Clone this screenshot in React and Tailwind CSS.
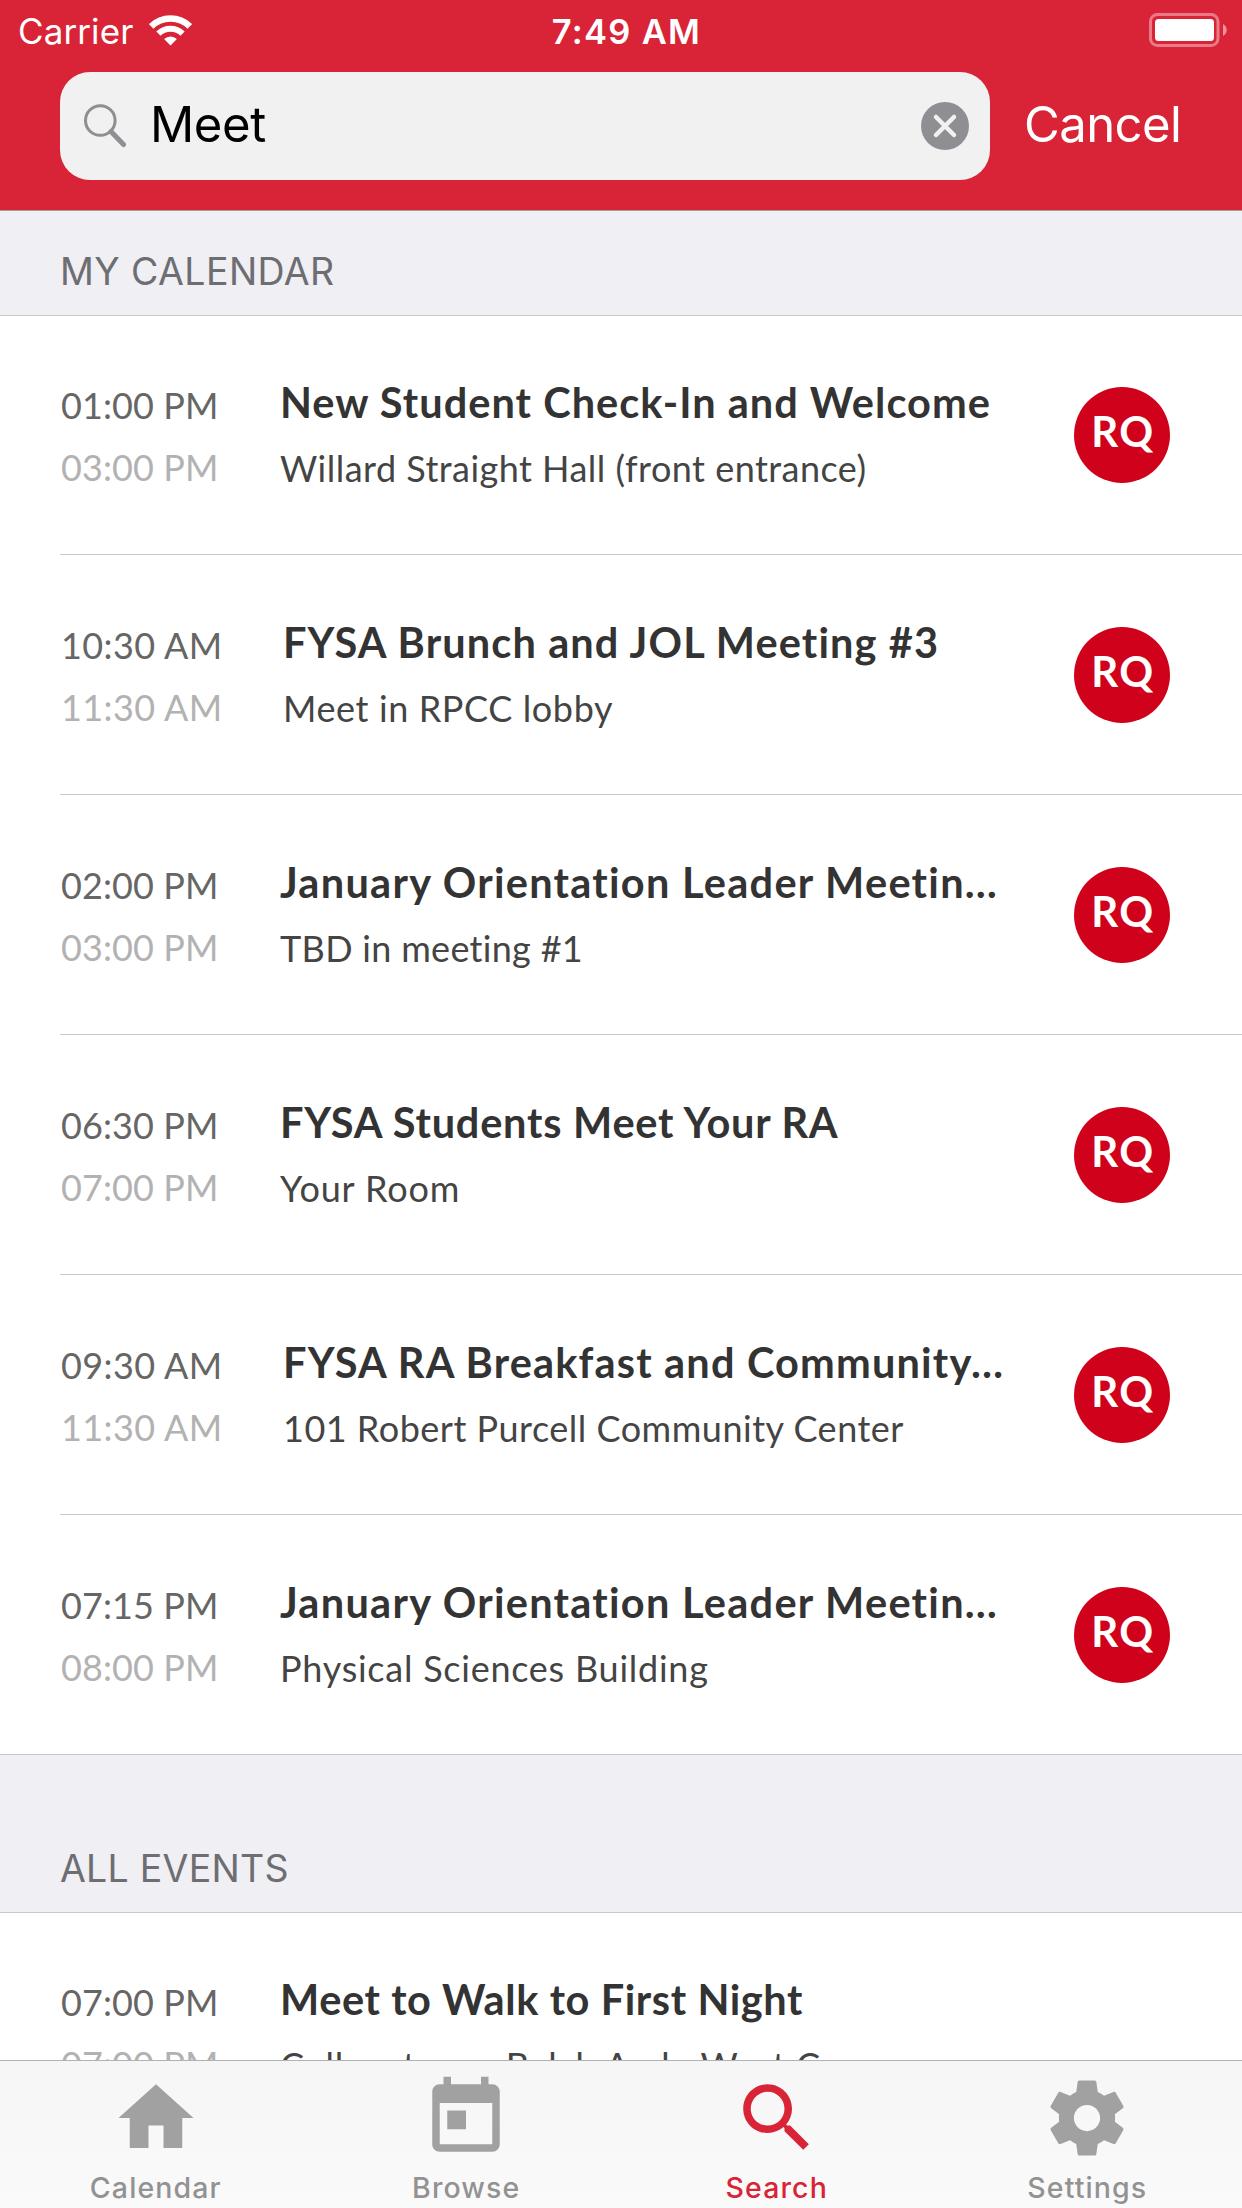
import React from "react";

const myCalendar = [
  {
    start: "01:00 PM",
    end: "03:00 PM",
    title: "New Student Check-In and Welcome",
    place: "Willard Straight Hall (front entrance)",
    titleTracking: "tracking-[1.03px]",
    placeTracking: "tracking-[0.47px]",
  },
  {
    start: "10:30 AM",
    end: "11:30 AM",
    title: "FYSA Brunch and JOL Meeting #3",
    place: "Meet in RPCC lobby",
    titleTracking: "tracking-[1.12px]",
    placeTracking: "tracking-[0.61px]",
  },
  {
    start: "02:00 PM",
    end: "03:00 PM",
    title: "January Orientation Leader Meetin…",
    place: "TBD in meeting #1",
    titleTracking: "tracking-[1.28px]",
    placeTracking: "tracking-[0.3px]",
  },
  {
    start: "06:30 PM",
    end: "07:00 PM",
    title: "FYSA Students Meet Your RA",
    place: "Your Room",
    titleTracking: "tracking-[0.77px]",
    placeTracking: "tracking-[0.87px]",
  },
  {
    start: "09:30 AM",
    end: "11:30 AM",
    title: "FYSA RA Breakfast and Community…",
    place: "101 Robert Purcell Community Center",
    titleTracking: "tracking-[1.17px]",
    placeTracking: "tracking-[0.5px]",
  },
  {
    start: "07:15 PM",
    end: "08:00 PM",
    title: "January Orientation Leader Meetin…",
    place: "Physical Sciences Building",
    titleTracking: "tracking-[1.28px]",
    placeTracking: "tracking-[0.75px]",
  },
];

const allEvents = [
  {
    start: "07:00 PM",
    end: "07:00 PM",
    title: "Meet to Walk to First Night",
    place: "Collegetown, Balch Arch, West Campus",
    titleTracking: "tracking-[0.6px]",
    placeTracking: "tracking-[0.75px]",
  },
];

const tabs = [
  { label: "Calendar", path: "M10 20v-6h4v6h5v-8h3L12 3 2 12h3v8z" },
  {
    label: "Browse",
    path: "M19 3h-1V1h-2v2H8V1H6v2H5c-1.11 0-1.99.9-1.99 2L3 19c0 1.1.89 2 2 2h14c1.1 0 2-.9 2-2V5c0-1.1-.9-2-2-2zm0 16H5V8h14v11zM7 10h5v5H7z",
  },
  {
    label: "Search",
    active: true,
    path: "M15.5 14h-.79l-.28-.27C15.41 12.59 16 11.11 16 9.5 16 5.91 13.09 3 9.5 3S3 5.91 3 9.5 5.91 16 9.5 16c1.61 0 3.09-.59 4.23-1.57l.27.28v.79l5 4.99L20.49 19l-4.99-5zm-6 0C7.01 14 5 11.99 5 9.5S7.01 5 9.5 5 14 7.01 14 9.5 11.99 14 9.5 14z",
  },
  {
    label: "Settings",
    path: "M19.43 12.98c.04-.32.07-.64.07-.98s-.03-.66-.07-.98l2.11-1.65c.19-.15.24-.42.12-.64l-2-3.46c-.12-.22-.39-.3-.61-.22l-2.49 1c-.52-.4-1.08-.73-1.69-.98l-.38-2.65C14.46 2.18 14.25 2 14 2h-4c-.25 0-.46.18-.49.42l-.38 2.65c-.61.25-1.17.59-1.69.98l-2.49-1c-.23-.09-.49 0-.61.22l-2 3.46c-.13.22-.07.49.12.64l2.11 1.65c-.04.32-.07.65-.07.98s.03.66.07.98l-2.11 1.65c-.19.15-.24.42-.12.64l2 3.46c.12.22.39.3.61.22l2.49-1c.52.4 1.08.73 1.69.98l.38 2.65c.03.24.24.42.49.42h4c.25 0 .46-.18.49-.42l.38-2.65c.61-.25 1.17-.59 1.69-.98l2.49 1c.23.09.49 0 .61-.22l2-3.46c.12-.22.07-.49-.12-.64l-2.11-1.65zM12 15.5c-1.93 0-3.5-1.57-3.5-3.5s1.57-3.5 3.5-3.5 3.5 1.57 3.5 3.5-1.57 3.5-3.5 3.5z",
  },
];

function StatusBar() {
  return (
    <div className="grid h-[62px] grid-cols-3 leading-[62px] text-white">
      <div className="flex pl-[18px]">
        <span className="text-[35px] tracking-[0.1px]">Carrier</span>
        <svg className="mt-[15px] ml-[16px] h-[31px] w-[43px]" viewBox="0 0 43 31" fill="none">
          <path d="M2.2 11.4A27.6 27.6 0 0 1 40.8 11.4" stroke="#fff" strokeWidth="6.4" />
          <path d="M9.4 18.7A17.4 17.4 0 0 1 33.6 18.7" stroke="#fff" strokeWidth="6" />
          <path d="M21.5 30.4l-6.4-6.3a9.2 9.2 0 0 1 12.8 0z" fill="#fff" />
        </svg>
      </div>
      <div className="pt-px pl-[11px] text-center text-[34.5px] font-semibold tracking-[1.3px]">7:49 AM</div>
      <div className="flex justify-end pt-[13px] pr-[15px]">
        <svg className="h-[34px] w-[78px]" viewBox="0 0 78 34">
          <rect x="1.5" y="1.5" width="67.5" height="31" rx="7" fill="none" stroke="#fff" strokeOpacity=".4" strokeWidth="3" />
          <rect x="6" y="6" width="59" height="22" rx="3.5" fill="#fff" />
          <path d="M74 11c5 2.6 5 9.4 0 12z" fill="#fff" fillOpacity=".5" />
        </svg>
      </div>
    </div>
  );
}

function SearchRow() {
  return (
    <div className="mt-[10px] flex h-[108px] items-center pl-[60px]">
      <div className="flex h-full w-[930px] items-center rounded-[30px] bg-[#f1f1f2] pr-[21px] pl-[24px]">
        <svg className="h-[44px] w-[44px]" viewBox="0 0 44 44" fill="none" stroke="#8e8e93">
          <circle cx="16.3" cy="16.5" r="14.8" strokeWidth="3" />
          <path d="M27 27.5L39.5 40.5" strokeWidth="5" strokeLinecap="round" />
        </svg>
        <span className="flex-1 pb-[2px] pl-[22px] text-[49px] tracking-[-0.4px] text-black">Meet</span>
        <svg className="h-[48px] w-[48px]" viewBox="0 0 48 48">
          <circle cx="24" cy="24" r="24" fill="#8e8e93" />
          <path d="M15 15l18 18M33 15L15 33" stroke="#f1f1f2" strokeWidth="4.5" strokeLinecap="round" />
        </svg>
      </div>
      <span className="ml-[34px] pb-[2px] text-[49px] tracking-[-0.55px] text-white">Cancel</span>
    </div>
  );
}

function SectionHeader({ label, size, tracking }) {
  return (
    <div className={`flex shrink-0 items-end border-b border-[#c8c7cc] bg-[#efeff4] pb-[23px] pl-[60px] ${size}`}>
      <span className={`text-[37.5px] leading-[40px] text-[#6d6d72] ${tracking}`}>{label}</span>
    </div>
  );
}

function EventRow({ event, avatar, last }) {
  const morning = event.start.endsWith("AM");
  return (
    <div className="h-[240px] shrink-0 pl-[60px] font-['Lato',sans-serif]">
      <div className={`flex h-full border-b ${last ? "border-transparent" : "border-[#c8c7cc]"}`}>
        <div
          className={`pt-[59px] pl-px text-[36px] leading-[62px] whitespace-nowrap ${
            morning ? "w-[223px] tracking-[0.42px]" : "w-[220px] tracking-[0.1px]"
          }`}
        >
          <div className="text-[#666666]">{event.start}</div>
          <div className="text-[#b2b2b2]">{event.end}</div>
        </div>
        <div className="flex-1 pt-[57px] whitespace-nowrap">
          <div className={`text-[41.5px] leading-[60px] font-bold text-[#333333] ${event.titleTracking}`}>{event.title}</div>
          <div className={`text-[36px] leading-[72px] text-[#444444] ${event.placeTracking}`}>{event.place}</div>
        </div>
        {avatar && (
          <div className="mt-[72px] mr-[72px] flex h-[96px] w-[96px] items-center justify-center rounded-full bg-[#d0021b] pb-[7px] pl-[2px] text-[42px] font-bold tracking-[1.5px] text-white">
            RQ
          </div>
        )}
      </div>
    </div>
  );
}

function TabBar() {
  return (
    <nav className="grid h-[148px] shrink-0 grid-cols-4 border-t border-[#b2b2b2] bg-linear-to-b from-[#f6f6f6] to-[#fafafa]">
      {tabs.map((tab) => (
        <div
          key={tab.label}
          className={`flex flex-col items-center pt-[12px] pl-px ${tab.active ? "text-[#d92336]" : "text-[#929292]"}`}
        >
          <svg
            className={`h-[90px] w-[90px] ${tab.active ? "fill-[#d92336]" : "fill-[#a1a1a1]"}`}
            viewBox="0 0 24 24"
          >
            <path d={tab.path} />
          </svg>
          <span className="mt-[7px] text-[28.5px] leading-[36px] font-medium tracking-[1.1px]">{tab.label}</span>
        </div>
      ))}
    </nav>
  );
}

export default function App() {
  return (
    <div className="flex h-[2208px] w-[1242px] flex-col overflow-hidden bg-white font-['Inter',sans-serif]">
      <header className="h-[211px] shrink-0 border-b border-[#a39ba0] bg-[#d92336]">
        <StatusBar />
        <SearchRow />
      </header>
      <main className="flex min-h-0 flex-1 flex-col overflow-hidden">
        <SectionHeader label="MY CALENDAR" size="h-[105px] -mb-px" tracking="tracking-[0.39px]" />
        {myCalendar.map((event, i) => (
          <EventRow key={event.title + event.start} event={event} avatar last={i === myCalendar.length - 1} />
        ))}
        <SectionHeader label="ALL EVENTS" size="-mt-px h-[159px] -mb-px border-t" tracking="tracking-[0.25px]" />
        {allEvents.map((event) => (
          <EventRow key={event.title} event={event} last />
        ))}
      </main>
      <TabBar />
    </div>
  );
}
